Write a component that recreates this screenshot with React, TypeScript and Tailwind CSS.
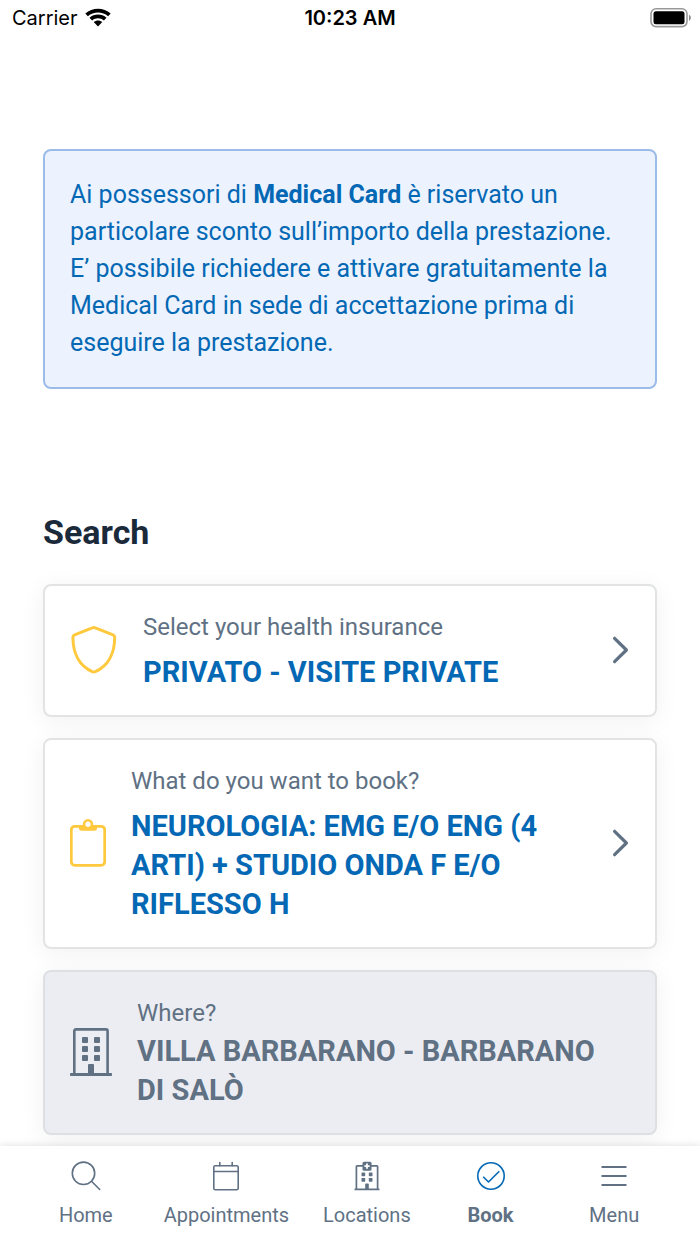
import type { ReactNode } from "react";

function WifiIcon() {
  return (
    <svg viewBox="0 0 26 20" className="h-5 w-[26px]" aria-hidden="true">
      <path d="M.3 5.500C7.300 -.9 18.700 -.9 25.700 5.500L23.100 8.200C17.600 3.200 8.400 3.200 2.900 8.200Z" fill="#000" />
      <path d="M4.500 9.800C9.200 5.500 16.800 5.500 21.500 9.800L18.900 12.500C15.700 9.600 10.300 9.600 7.100 12.500Z" fill="#000" />
      <path d="M8.700 14.100C11.300 11.900 14.700 11.900 17.300 14.100L13 18.500Z" fill="#000" />
    </svg>
  );
}

function BatteryIcon() {
  return (
    <svg viewBox="0 0 42 20" className="h-5 w-[42px]" aria-hidden="true">
      <rect x="1" y=".8" width="36" height="17.800" rx="5" fill="none" stroke="#999" strokeWidth="1.600" />
      <rect x="3.500" y="3.200" width="31" height="13" rx="2.500" fill="#000" />
      <path d="M39 6.700C41.400 7.400 41.400 12 39 12.700Z" fill="#888" />
    </svg>
  );
}

function ShieldIcon() {
  return (
    <svg viewBox="0 0 48 50" className="h-[50px] w-12 shrink-0" fill="none" stroke="#ffc93e" strokeWidth="3" strokeLinejoin="round" aria-hidden="true">
      <path d="M22.300 2.800Q23.800 2.100 25.300 2.800L43 9.800Q44.700 10.500 44.700 12.300C44.700 28.500 38 41 25.300 46.600Q23.800 47.200 22.300 46.600C9.600 41 2.900 28.500 2.900 12.300Q2.900 10.500 4.600 9.800Z" />
    </svg>
  );
}

function ClipboardIcon() {
  return (
    <svg viewBox="0 0 36 48" className="h-12 w-9 shrink-0" fill="none" stroke="#ffc93e" aria-hidden="true">
      <rect x="1.300" y="7.300" width="33.400" height="39" rx="3.500" strokeWidth="2.800" />
      <path d="M9 6H27V9.500Q27 11.800 24.700 11.800H11.300Q9 11.800 9 9.500Z" fill="#ffc93e" stroke="none" />
      <circle cx="18" cy="5.200" r="3.900" strokeWidth="2.600" fill="#fff" />
    </svg>
  );
}

function BuildingIcon() {
  return (
    <svg viewBox="0 0 42 48" className="h-12 w-[42px] shrink-0" fill="#607184" aria-hidden="true">
      <path d="M4.300 46V3Q4.300 1.400 5.900 1.400H36Q37.600 1.400 37.600 3V46" fill="none" stroke="#607184" strokeWidth="2.600" />
      <rect x="0" y="45" width="42" height="3" rx=".8" />
      <rect x="12" y="9" width="6" height="6" rx="1" />
      <rect x="24" y="9" width="6" height="6" rx="1" />
      <rect x="12" y="18" width="6" height="6" rx="1" />
      <rect x="24" y="18" width="6" height="6" rx="1" />
      <rect x="12" y="27" width="6" height="6" rx="1" />
      <rect x="24" y="27" width="6" height="6" rx="1" />
      <path d="M18 46V37Q18 36 19 36H23Q24 36 24 37V46Z" />
    </svg>
  );
}

function ChevronIcon() {
  return (
    <svg viewBox="0 0 19 28" className="h-7 w-[19px] shrink-0" fill="none" stroke="#607184" strokeWidth="3.200" strokeLinecap="round" strokeLinejoin="round" aria-hidden="true">
      <path d="M3.600 2.300 15.400 14 3.600 25.700" />
    </svg>
  );
}

type CardProps = {
  icon: ReactNode;
  label: string;
  value: string;
  disabled?: boolean;
};

function SearchCard({ icon, label, value, disabled = false }: CardProps) {
  return (
    <button
      type="button"
      disabled={disabled}
      className={
        disabled
          ? "flex w-full items-center gap-[25px] rounded-lg border-2 border-[#dddfe2] bg-[#ecedf2] px-[25px] pt-[22px] pb-[23px] text-left text-[#607184] shadow-[0_4px_24px_rgba(0,0,0,0.06)]"
          : "flex w-full items-center gap-[25px] rounded-lg border-2 border-[#e2e3e4] bg-white px-[25px] pt-[22px] pb-[23px] text-left text-[#0468b4] shadow-[0_4px_24px_rgba(0,0,0,0.06)]"
      }
    >
      {icon}
      <span className={disabled ? "flex flex-1 flex-col gap-1 pt-1 pr-5" : "flex flex-1 flex-col gap-[11px] pt-1"}>
        <span className="text-2xl leading-[30px] text-[#607184]">{label}</span>
        <span className="text-[29px] leading-[39px] font-bold">{value}</span>
      </span>
      {!disabled && <ChevronIcon />}
    </button>
  );
}

function SearchIcon() {
  return (
    <svg viewBox="0 0 30 30" className="h-[30px] w-[30px]" fill="none" stroke="#607184" strokeWidth="1.600" strokeLinecap="round" aria-hidden="true">
      <circle cx="12.500" cy="12.300" r="11.200" />
      <path d="M20.500 20.300 28.700 28.500" />
    </svg>
  );
}

function CalendarIcon() {
  return (
    <svg viewBox="0 0 30 30" className="h-[30px] w-[30px]" fill="none" stroke="#607184" strokeWidth="1.600" strokeLinecap="round" aria-hidden="true">
      <rect x="2.800" y="4.800" width="24.400" height="24" rx="1.500" />
      <path d="M2.800 10.500H27.200M8.800 1.500V4.800M21.200 1.500V4.800" />
    </svg>
  );
}

function HospitalIcon() {
  return (
    <svg viewBox="0 0 30 30" className="h-[30px] w-[30px]" fill="#607184" aria-hidden="true">
      <path d="M4.400 28V5.500Q4.400 4.800 5.100 4.800H24.900Q25.600 4.800 25.600 5.500V28" fill="none" stroke="#607184" strokeWidth="1.700" />
      <rect x="2.500" y="27.500" width="25" height="1.800" rx=".5" />
      <rect x="10.500" y=".8" width="9" height="9" rx="1.500" />
      <path d="M15 2.600V7.800M12.400 5.200H17.600" stroke="#fff" strokeWidth="1.800" />
      <rect x="9.500" y="11.500" width="3.700" height="3.700" rx=".6" />
      <rect x="16.800" y="11.500" width="3.700" height="3.700" rx=".6" />
      <rect x="9.500" y="17" width="3.700" height="3.700" rx=".6" />
      <rect x="16.800" y="17" width="3.700" height="3.700" rx=".6" />
      <path d="M13.200 28V23.400Q13.200 22.600 14 22.600H16Q16.800 22.600 16.800 23.400V28Z" />
    </svg>
  );
}

function CheckCircleIcon() {
  return (
    <svg viewBox="0 0 30 30" className="h-[30px] w-[30px]" fill="none" stroke="#0468b4" strokeWidth="1.600" strokeLinecap="round" strokeLinejoin="round" aria-hidden="true">
      <circle cx="15" cy="15" r="13.200" />
      <path d="M7.700 16.200 12.500 21 22.800 10.700" />
    </svg>
  );
}

function MenuIcon() {
  return (
    <svg viewBox="0 0 30 30" className="h-[30px] w-[30px]" stroke="#607184" strokeWidth="1.800" aria-hidden="true">
      <path d="M2.500 6H27.500M2.500 15H27.500M2.500 24H27.500" />
    </svg>
  );
}

const tabs = [
  { label: "Home", icon: <SearchIcon /> },
  { label: "Appointments", icon: <CalendarIcon /> },
  { label: "Locations", icon: <HospitalIcon /> },
  { label: "Book", icon: <CheckCircleIcon />, active: true },
  { label: "Menu", icon: <MenuIcon /> },
];

export default function App() {
  return (
    <div className="flex min-h-screen flex-col bg-white font-['Roboto',sans-serif]">
      <header className="grid h-9 grid-cols-3 items-center px-2 font-['Inter',sans-serif] text-xl leading-6 text-black">
        <span className="flex items-center gap-[7px] pl-1">
          Carrier
          <WifiIcon />
        </span>
        <time className="text-center font-semibold">10:23 AM</time>
        <span className="flex justify-end">
          <BatteryIcon />
        </span>
      </header>

      <main className="flex-1 px-[43px] pt-[113px] pb-[11px]">
        <p className="rounded-lg border-2 border-[#9bbbe8] bg-[#ecf3fe] px-[25px] pt-[25px] pb-[26px] text-[25px] leading-[37px] text-[#0468b4]">
          Ai possessori di <strong className="font-bold">Medical Card</strong> è riservato un particolare sconto
          sull’importo della prestazione. E’ possibile richiedere e attivare gratuitamente la Medical Card in sede di
          accettazione prima di eseguire la prestazione.
        </p>

        <section className="mt-[123px]">
          <h1 className="text-[34px] leading-10 font-bold text-[#1b2a3a]">Search</h1>
          <div className="mt-8 flex flex-col gap-[21px]">
            <SearchCard icon={<ShieldIcon />} label="Select your health insurance" value="PRIVATO - VISITE PRIVATE" />
            <SearchCard
              icon={<ClipboardIcon />}
              label="What do you want to book?"
              value="NEUROLOGIA: EMG E/O ENG (4 ARTI) + STUDIO ONDA F E/O RIFLESSO H"
            />
            <SearchCard icon={<BuildingIcon />} label="Where?" value="VILLA BARBARANO - BARBARANO DI SALÒ" disabled />
          </div>
        </section>
      </main>

      <nav className="sticky bottom-0 flex bg-white px-6 pt-[15px] pb-[15px] shadow-[0_0_8px_rgba(0,0,0,0.14)]">
        {tabs.map((tab) => (
          <a
            key={tab.label}
            href="#"
            aria-current={tab.active ? "page" : undefined}
            className="flex flex-1 flex-col items-center gap-[10px] px-4 text-xl leading-7 text-[#607184]"
          >
            {tab.icon}
            <span className={tab.active ? "font-bold" : "font-normal"}>{tab.label}</span>
          </a>
        ))}
      </nav>
    </div>
  );
}
